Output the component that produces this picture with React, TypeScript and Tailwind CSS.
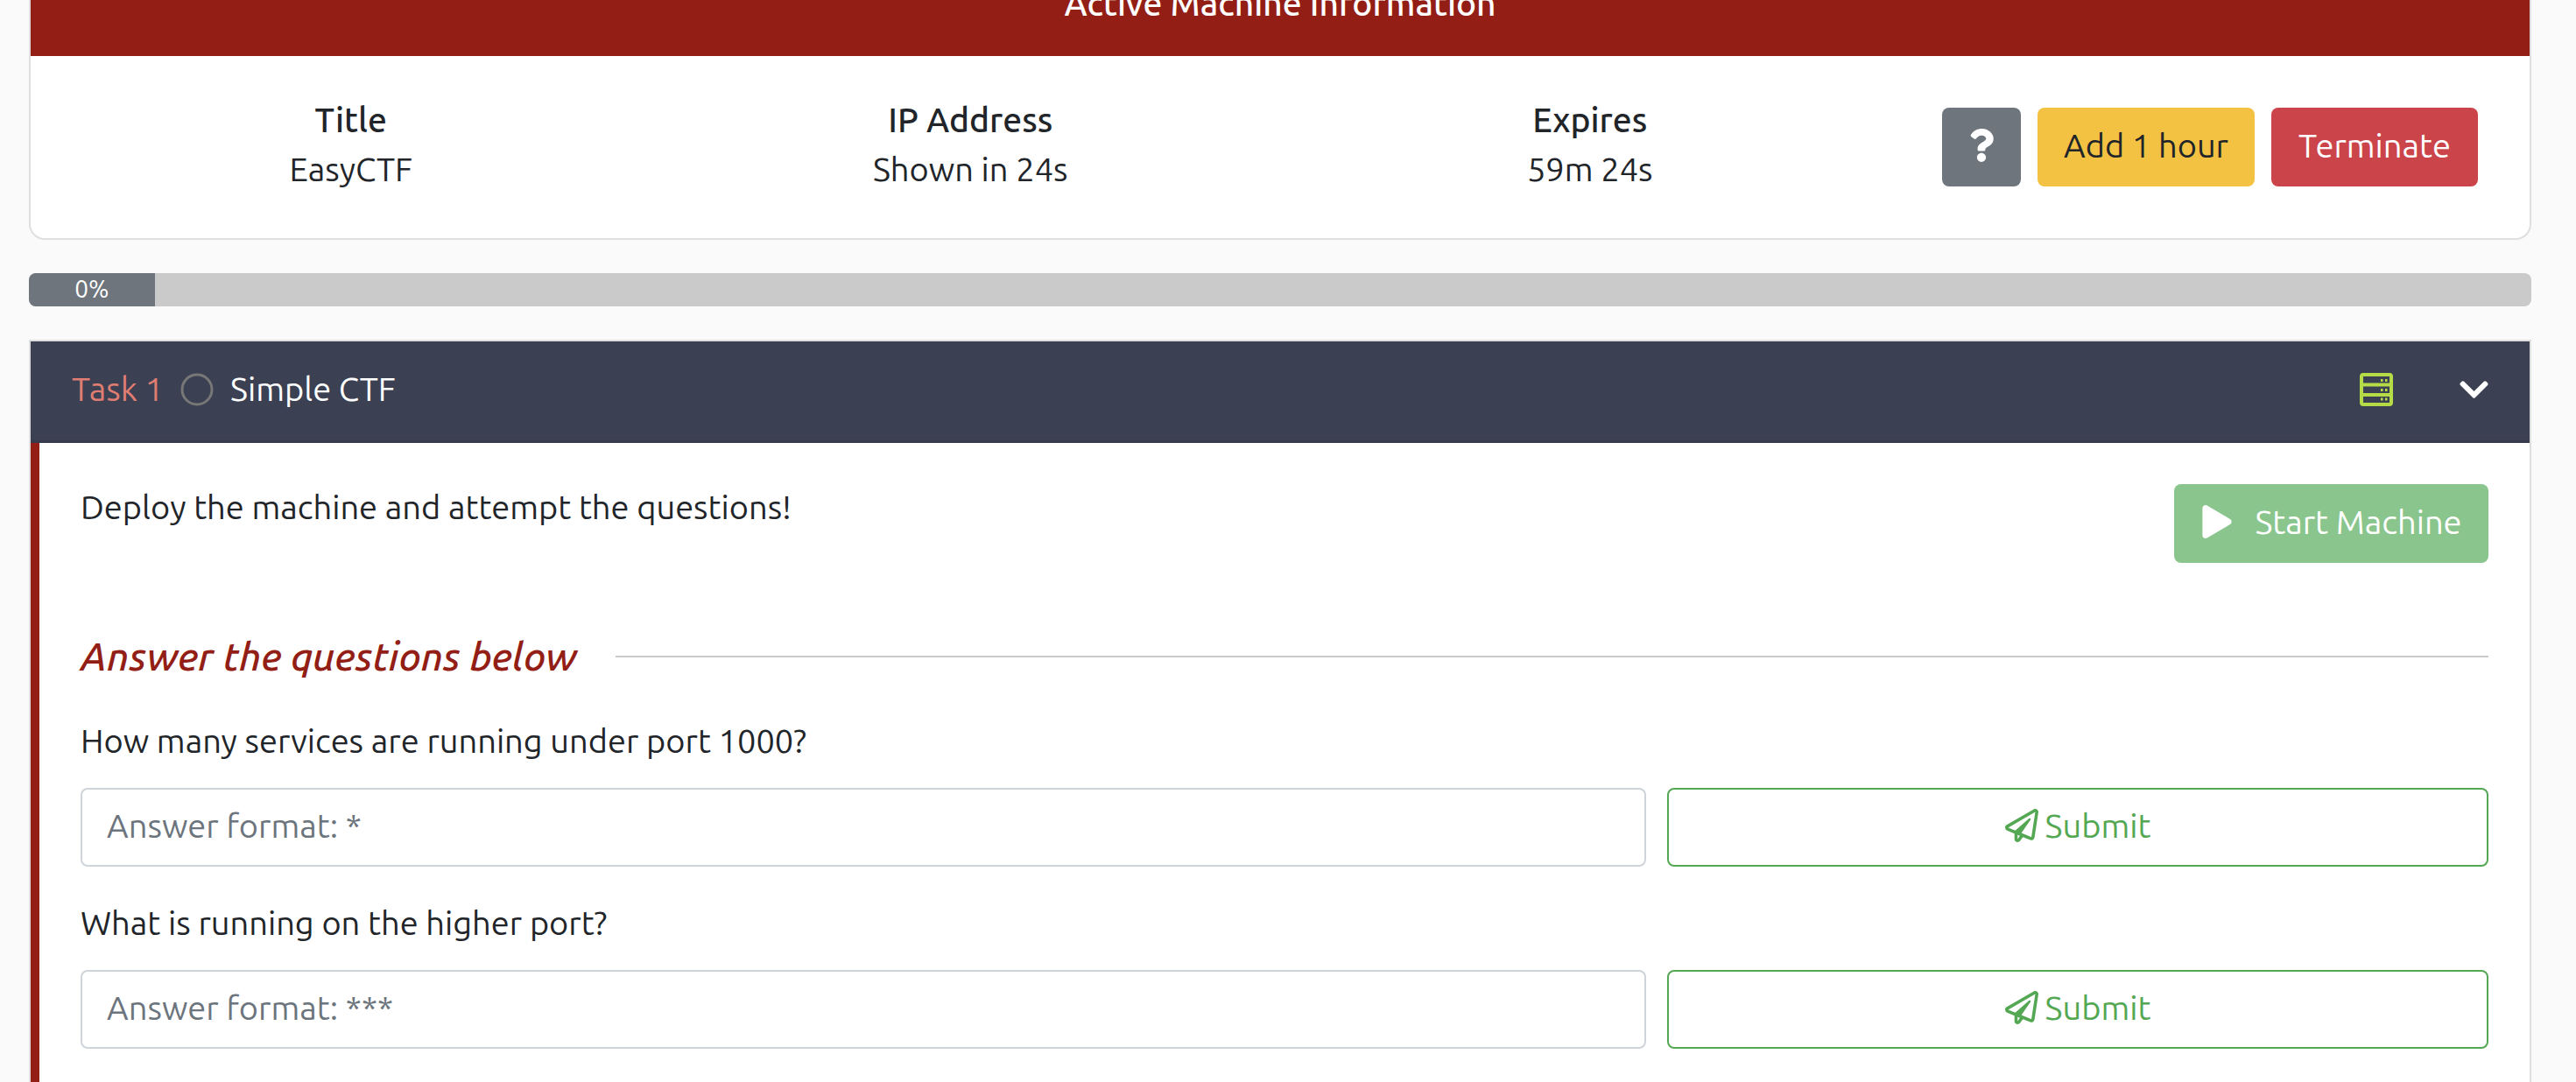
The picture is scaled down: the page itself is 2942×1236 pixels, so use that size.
import { useState } from "react";
import { FaChevronDown, FaPlay, FaQuestion, FaRegPaperPlane } from "react-icons/fa";

const details = [
  { label: "Title", value: "EasyCTF" },
  { label: "IP Address", value: "Shown in 24s" },
  { label: "Expires", value: "59m 24s" },
];

const questions = [
  { id: "q1", text: "How many services are running under port 1000?", hint: "Answer format: *" },
  { id: "q2", text: "What is running on the higher port?", hint: "Answer format: ***" },
];

function ServerIcon() {
  return (
    <svg viewBox="0 0 38 38" className="size-[38px]" fill="none" stroke="currentColor" aria-hidden="true">
      <rect x="2" y="2" width="34" height="34" rx="2" strokeWidth="4" />
      <path d="M2 13.5h34M2 25h34" strokeWidth="4" />
      <path d="M24 8.5h2.5M29 8.5h2.5M24 19.5h2.5M29 19.5h2.5M24 30h2.5M29 30h2.5" strokeWidth="3" />
    </svg>
  );
}

function MachineInfo() {
  return (
    <section className="overflow-hidden rounded-b-[18px] border-2 border-t-0 border-[#dfdfdf] bg-white">
      <div className="flex h-16 items-end justify-center bg-[#921e15] pb-8">
        <h2 className="shrink-0 text-[39px] leading-[57px] font-medium text-white">Active Machine Information</h2>
      </div>
      <div className="grid grid-cols-4 px-3 pt-[44px] pb-[50px]">
        {details.map((d) => (
          <dl key={d.label} className="text-center leading-[57px]">
            <dt className="text-[39px] font-medium">{d.label}</dt>
            <dd>{d.value}</dd>
          </dl>
        ))}
        <div className="flex items-start justify-end gap-[19px] pt-[15px] pr-[47px]">
          <button aria-label="Help" className="flex h-[90px] w-[90px] items-center justify-center rounded-lg bg-[#6e757c] pb-1 text-white">
            <FaQuestion className="size-[38px]" />
          </button>
          <button className="h-[90px] w-[248px] rounded-lg bg-[#f4c243] pb-1 whitespace-nowrap">Add 1 hour</button>
          <button className="h-[90px] w-[236px] rounded-lg bg-[#cb444a] pb-1 whitespace-nowrap text-white">Terminate</button>
        </div>
      </div>
    </section>
  );
}

function Progress({ percent }: { percent: number }) {
  return (
    <div role="progressbar" aria-valuenow={percent} className="flex h-[38px] overflow-hidden rounded-lg bg-[#cacaca]">
      <div className="w-36 bg-[#6e757c] text-center text-[28px] leading-[36px] text-white">{percent}%</div>
    </div>
  );
}

function Question({ id, text, hint }: { id: string; text: string; hint: string }) {
  const [answer, setAnswer] = useState("");
  return (
    <form onSubmit={(e) => e.preventDefault()}>
      <label htmlFor={id} className="block leading-[57px]">{text}</label>
      <div className="mt-[25px] grid grid-cols-[1788fr_938fr] gap-6">
        <input
          id={id}
          value={answer}
          onChange={(e) => setAnswer(e.target.value)}
          placeholder={hint}
          className="h-[90px] min-w-0 rounded-lg border-2 border-[#ced4da] bg-white px-7 pb-1 placeholder:text-[#6c757d]"
        />
        <button className="flex h-[90px] items-center justify-center gap-2 rounded-lg border-2 border-[#54a753] pb-1 text-[#54a753]">
          <FaRegPaperPlane className="size-[38px]" />
          Submit
        </button>
      </div>
    </form>
  );
}

function Task() {
  return (
    <section className="border-2 border-b-0 border-[#dfdfdf] bg-white">
      <header className="flex h-[116px] items-center border-b-3 border-[#363a4b] bg-[#3b4052] px-[47px] pb-1 leading-[57px]">
        <span className="text-[#df7d72]">Task 1</span>
        <svg viewBox="0 0 38 38" className="mx-[19px] size-[38px] text-[#777777]" fill="none" stroke="currentColor" strokeWidth="3" aria-hidden="true">
          <circle cx="19" cy="19" r="17" />
        </svg>
        <h2 className="text-white">Simple CTF</h2>
        <span className="ml-auto text-[#b5dc47]">
          <ServerIcon />
        </span>
        <button aria-label="Collapse task" className="ml-[76px] text-white">
          <FaChevronDown className="h-[38px] w-[33px]" />
        </button>
      </header>
      <div className="border-l-10 border-[#921e15] px-[47px] pt-[47px] pb-12">
        <div className="flex items-start justify-between">
          <p className="leading-[52px]">Deploy the machine and attempt the questions!</p>
          <button className="flex h-[90px] w-[359px] items-center justify-center gap-6 rounded-lg bg-[#89c58c] pb-1 whitespace-nowrap text-white">
            <FaPlay className="size-[38px]" />
            Start Machine
          </button>
        </div>
        <div className="mt-[78px] flex items-center gap-[44px]">
          <h3 className="text-[45px] leading-[57px] font-medium whitespace-nowrap text-[#921e15] italic">Answer the questions below</h3>
          <div className="h-[2px] flex-1 bg-[#cacaca]" />
        </div>
        <div className="mt-10 flex flex-col gap-9">
          {questions.map((q) => (
            <Question key={q.id} id={q.id} text={q.text} hint={q.hint} />
          ))}
        </div>
      </div>
    </section>
  );
}

export default function App() {
  return (
    <main className="flex h-screen flex-col gap-[38px] overflow-hidden bg-[#fafafa] pr-[51px] pl-[33px] font-['Ubuntu','Noto_Sans',sans-serif] text-[38px] text-[#212529] *:shrink-0">
      <MachineInfo />
      <Progress percent={0} />
      <Task />
    </main>
  );
}
